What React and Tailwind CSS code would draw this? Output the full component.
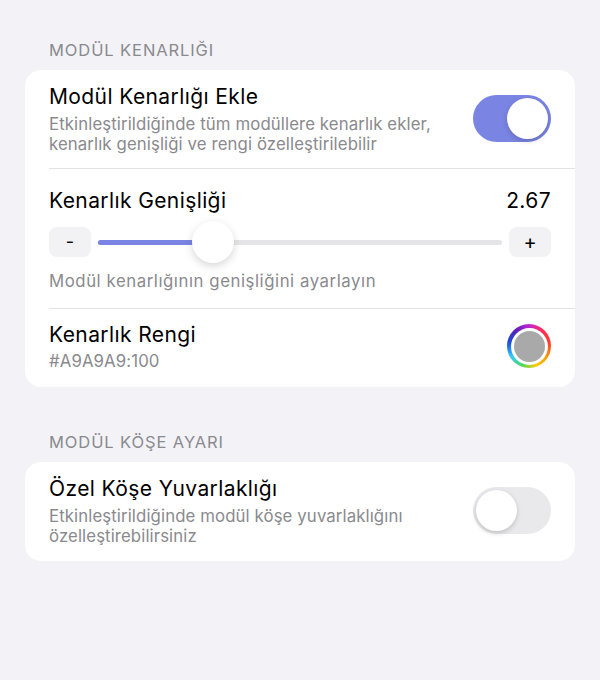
import { useState } from "react";

const font = { fontFamily: "Inter, 'Noto Sans', sans-serif" };

function Toggle({ on, onChange }) {
  return (
    <button
      onClick={() => onChange(!on)}
      className={`relative h-[47px] w-[78px] shrink-0 rounded-full transition ${on ? "bg-[#7a84e2]" : "bg-[#e9e9eb]"}`}
    >
      <span
        className={`absolute top-[3px] h-[41px] w-[41px] rounded-full bg-white shadow-[0_2px_5px_rgba(0,0,0,0.18)] transition-all ${on ? "left-[34px]" : "left-[3px]"}`}
      />
    </button>
  );
}

function SectionLabel({ children }) {
  return (
    <div className="px-[49px] pb-[10px] text-[16.5px] uppercase leading-5 tracking-[0.9px] text-[#8a8a8e]">
      {children}
    </div>
  );
}

const title = "text-[21px] leading-7 tracking-[0.4px] text-black";
const sub = "text-[16.8px] leading-5 text-[#8a8a8e]";

export default function App() {
  const [border, setBorder] = useState(true);
  const [corner, setCorner] = useState(false);
  const width = 2.67;
  const pct = 28.5;

  return (
    <div className="min-h-[680px] w-[600px] bg-[#f2f2f7] pt-[40px]" style={font}>
      <SectionLabel>Modül Kenarlığı</SectionLabel>
      <div className="mx-[25px] rounded-[16px] bg-white">
        <div className="flex items-center gap-4 pt-[13px] pb-[14px] px-6">
          <div className="min-w-0 flex-1">
            <div className={title}>Modül Kenarlığı Ekle</div>
            <div className={`mt-[3px] tracking-[0.1px] ${sub}`}>
              Etkinleştirildiğinde tüm modüllere kenarlık ekler, kenarlık genişliği ve rengi özelleştirilebilir
            </div>
          </div>
          <Toggle on={border} onChange={setBorder} />
        </div>
        <div className="ml-6 h-px bg-[#e3e3e6]" />
        <div className="px-6 pt-[18px] pb-[17px]">
          <div className={`flex items-center justify-between ${title}`}>
            <span>Kenarlık Genişliği</span>
            <span>{width}</span>
          </div>
          <div className="mt-[12px] flex items-center gap-[7px]">
            <button className="flex h-[30px] w-[42px] items-center justify-center rounded-[8px] bg-[#f2f2f4] text-[18px] leading-none text-black">
              -
            </button>
            <div className="relative h-[5px] flex-1 rounded-full bg-[#e5e5e8]">
              <div className="h-full rounded-full bg-[#7a84e2]" style={{ width: `${pct}%` }} />
              <div
                className="absolute top-1/2 h-[42px] w-[42px] -translate-x-1/2 -translate-y-1/2 rounded-full bg-white shadow-[0_3px_8px_rgba(0,0,0,0.16)]"
                style={{ left: `${pct}%` }}
              />
            </div>
            <button className="flex h-[30px] w-[42px] items-center justify-center rounded-[8px] bg-[#f2f2f4] text-[20px] leading-none text-black">
              +
            </button>
          </div>
          <div className={`mt-[14px] tracking-[0.55px] ${sub}`}>Modül kenarlığının genişliğini ayarlayın</div>
        </div>
        <div className="ml-6 h-px bg-[#e3e3e6]" />
        <div className="flex items-center gap-4 px-6 pt-[12px] pb-[16px]">
          <div className="flex-1">
            <div className={title}>Kenarlık Rengi</div>
            <div className={`mt-[2px] tracking-[0.1px] ${sub}`}>#A9A9A9:100</div>
          </div>
          <div className="flex h-[44px] w-[44px] items-center justify-center rounded-full bg-[conic-gradient(from_0deg,#c026d3,#ff2d55,#ff3b30,#ff9500,#ffcc00,#4cd964,#34c8ff,#1d4ed8,#5b21b6,#c026d3)]">
            <div className="flex h-[37px] w-[37px] items-center justify-center rounded-full bg-white">
              <div className="h-[31px] w-[31px] rounded-full bg-[#a9a9a9]" />
            </div>
          </div>
        </div>
      </div>

      <div className="pt-[45px]">
        <SectionLabel>Modül Köşe Ayarı</SectionLabel>
      </div>
      <div className="mx-[25px] rounded-[16px] bg-white">
        <div className="flex items-center gap-4 pt-[13px] pb-[15px] px-6">
          <div className="min-w-0 flex-1">
            <div className={title}>Özel Köşe Yuvarlaklığı</div>
            <div className={`mt-[3px] tracking-[0.1px] ${sub}`}>
              Etkinleştirildiğinde modül köşe yuvarlaklığını özelleştirebilirsiniz
            </div>
          </div>
          <Toggle on={corner} onChange={setCorner} />
        </div>
      </div>
    </div>
  );
}
